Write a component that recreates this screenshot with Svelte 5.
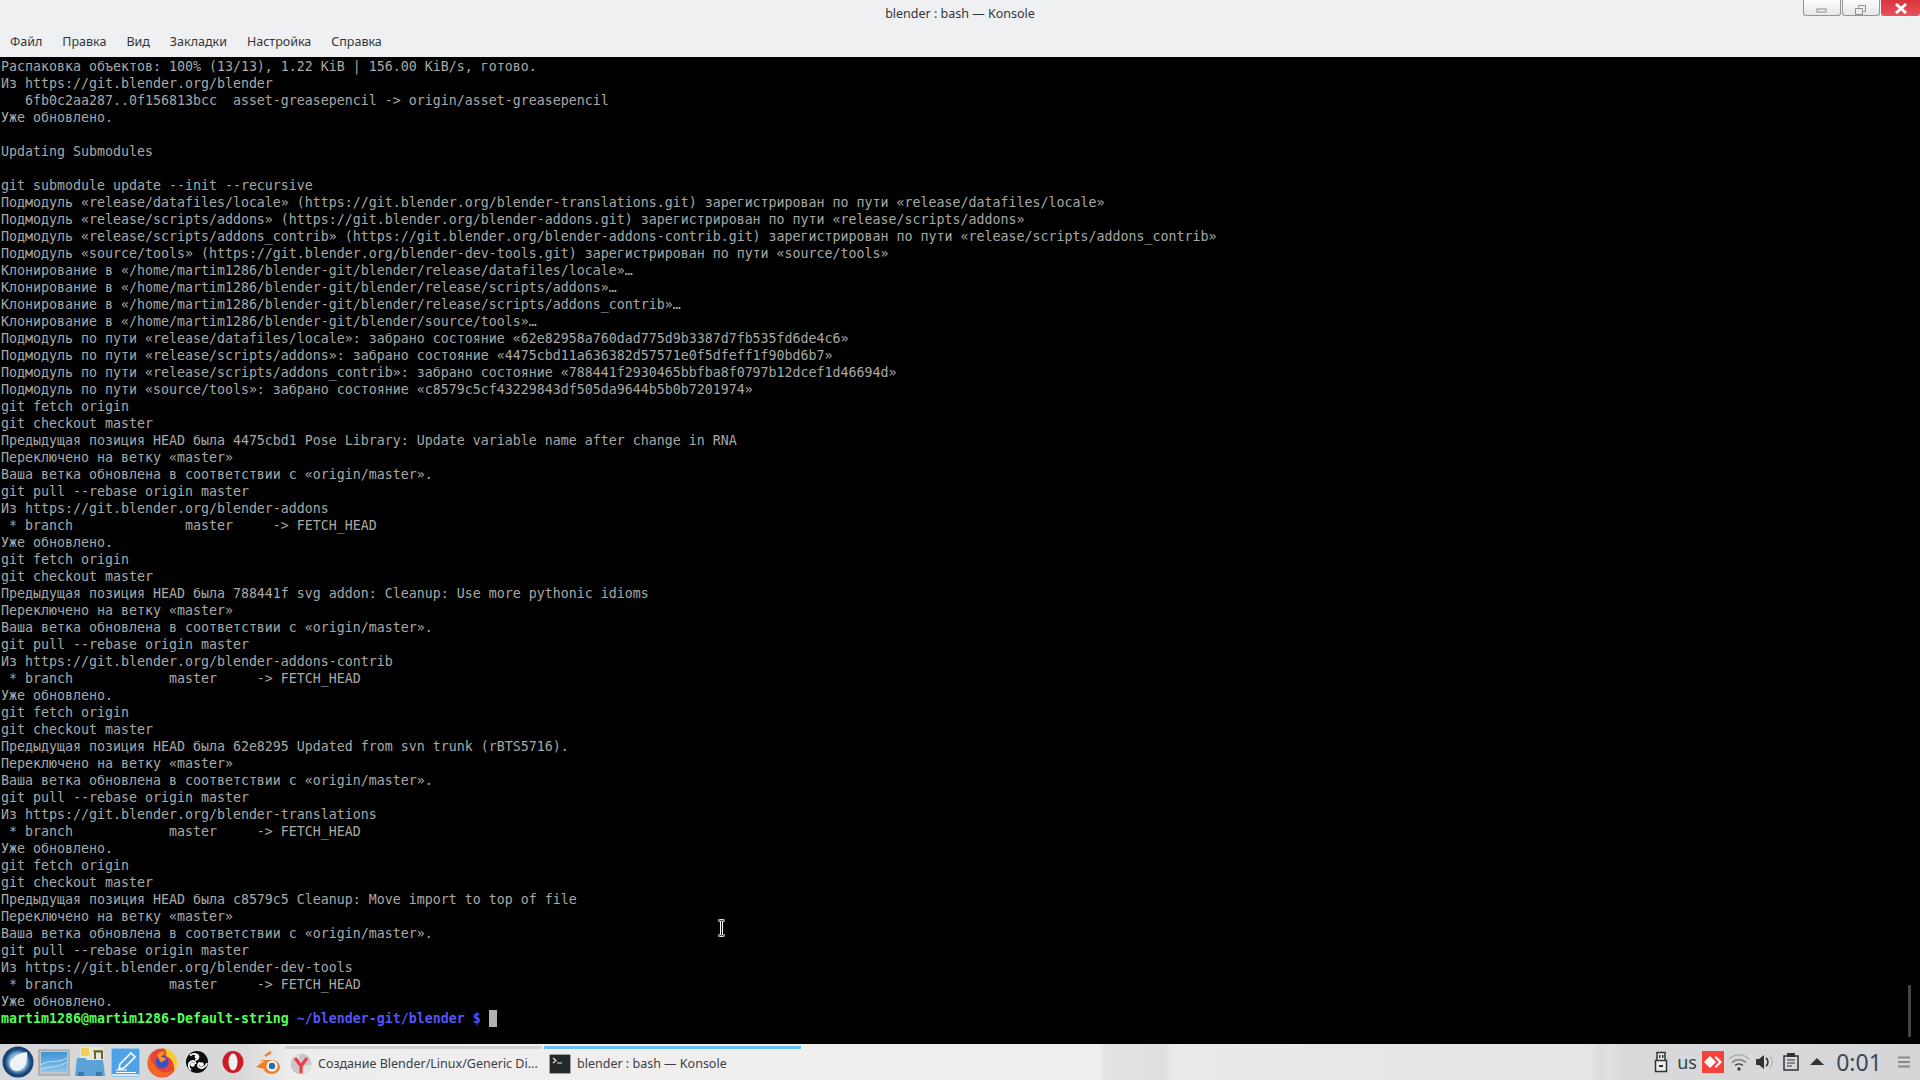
<script>
  const menus = ["Файл", "Правка", "Вид", "Закладки", "Настройка", "Справка"];

  const updated = "Уже обновлено.";
  const switched = [
    "Переключено на ветку «master»",
    "Ваша ветка обновлена в соответствии с «origin/master».",
    "git pull --rebase origin master",
  ];
  const fetchLines = ["git fetch origin", "git checkout master"];

  const lines = [
    "Распаковка объектов: 100% (13/13), 1.22 KiB | 156.00 KiB/s, готово.",
    "Из https://git.blender.org/blender",
    "   6fb0c2aa287..0f156813bcc  asset-greasepencil -> origin/asset-greasepencil",
    updated,
    "",
    "Updating Submodules",
    "",
    "git submodule update --init --recursive",
    "Подмодуль «release/datafiles/locale» (https://git.blender.org/blender-translations.git) зарегистрирован по пути «release/datafiles/locale»",
    "Подмодуль «release/scripts/addons» (https://git.blender.org/blender-addons.git) зарегистрирован по пути «release/scripts/addons»",
    "Подмодуль «release/scripts/addons_contrib» (https://git.blender.org/blender-addons-contrib.git) зарегистрирован по пути «release/scripts/addons_contrib»",
    "Подмодуль «source/tools» (https://git.blender.org/blender-dev-tools.git) зарегистрирован по пути «source/tools»",
    "Клонирование в «/home/martim1286/blender-git/blender/release/datafiles/locale»…",
    "Клонирование в «/home/martim1286/blender-git/blender/release/scripts/addons»…",
    "Клонирование в «/home/martim1286/blender-git/blender/release/scripts/addons_contrib»…",
    "Клонирование в «/home/martim1286/blender-git/blender/source/tools»…",
    "Подмодуль по пути «release/datafiles/locale»: забрано состояние «62e82958a760dad775d9b3387d7fb535fd6de4c6»",
    "Подмодуль по пути «release/scripts/addons»: забрано состояние «4475cbd11a636382d57571e0f5dfeff1f90bd6b7»",
    "Подмодуль по пути «release/scripts/addons_contrib»: забрано состояние «788441f2930465bbfba8f0797b12dcef1d46694d»",
    "Подмодуль по пути «source/tools»: забрано состояние «c8579c5cf43229843df505da9644b5b0b7201974»",
    ...fetchLines,
    "Предыдущая позиция HEAD была 4475cbd1 Pose Library: Update variable name after change in RNA",
    ...switched,
    "Из https://git.blender.org/blender-addons",
    " * branch              master     -> FETCH_HEAD",
    updated,
    ...fetchLines,
    "Предыдущая позиция HEAD была 788441f svg addon: Cleanup: Use more pythonic idioms",
    ...switched,
    "Из https://git.blender.org/blender-addons-contrib",
    " * branch            master     -> FETCH_HEAD",
    updated,
    ...fetchLines,
    "Предыдущая позиция HEAD была 62e8295 Updated from svn trunk (rBTS5716).",
    ...switched,
    "Из https://git.blender.org/blender-translations",
    " * branch            master     -> FETCH_HEAD",
    updated,
    ...fetchLines,
    "Предыдущая позиция HEAD была c8579c5 Cleanup: Move import to top of file",
    ...switched,
    "Из https://git.blender.org/blender-dev-tools",
    " * branch            master     -> FETCH_HEAD",
    updated,
  ];
</script>

<div class="screen">
  <header class="titlebar">
    <span class="title">blender : bash — Konsole</span>
    <div class="winbtns">
      <button class="winbtn" aria-label="Свернуть">
        <svg width="12" height="6" viewBox="0 0 12 6"><rect x="1" y="1" width="9" height="3" fill="#f4f4f4" stroke="#8e8e8e"/></svg>
      </button>
      <button class="winbtn" aria-label="Развернуть">
        <svg width="12" height="11" viewBox="0 0 12 11"><path d="M3.5 2.5V.5h7v6h-2M.5 3.5h7v6h-7z" fill="none" stroke="#8e8e8e"/></svg>
      </button>
      <button class="winbtn close" aria-label="Закрыть">
        <svg width="14" height="11" viewBox="0 0 14 11"><path d="M2 1l10 9M12 1L2 10" fill="none" stroke="#fff" stroke-width="3"/></svg>
      </button>
    </div>
  </header>

  <nav class="menubar">
    {#each menus as item}
      <span>{item}</span>
    {/each}
  </nav>

  <main class="terminal">
    {#each lines as line}
      <div class="row">{line}</div>
    {/each}
    <div class="row"><b class="green">martim1286@martim1286-Default-string</b> <b class="blue">~/blender-git/blender $</b> <span class="cursor"></span></div>
    <div class="scrollbar"></div>
    <svg class="ibeam" width="9" height="18" viewBox="0 0 9 18"><path d="M1 1h2l1.500 1L6 1h2M4.500 2v14M1 17h2l1.500-1L6 17h2" fill="none" stroke="#fff" stroke-width="3"/><path d="M1 1h2l1.500 1L6 1h2M4.500 2v14M1 17h2l1.500-1L6 17h2" fill="none" stroke="#111" stroke-width="1"/></svg>
  </main>

  <footer class="taskbar">
    <div class="launchers">
      <svg class="launcher" viewBox="0 0 32 32" width="32" height="32">
        <defs>
          <radialGradient id="orb"><stop offset="0.55" stop-color="#8fb4d6"/><stop offset="0.8" stop-color="#1d4f85"/><stop offset="1" stop-color="#123a68"/></radialGradient>
        </defs>
        <circle cx="16" cy="16" r="15.500" fill="url(#orb)"/>
        <path d="M25 6c1 8-1 18-10 19-5 0-8-4-7-8 1-6 9-10 17-11z" fill="#eef3f8"/>
      </svg>
      <svg class="launcher" viewBox="0 0 32 32" width="32" height="32">
        <defs>
          <linearGradient id="desk" x1="0" y1="0" x2="0" y2="1"><stop offset="0" stop-color="#3e93d3"/><stop offset="1" stop-color="#8cc6ec"/></linearGradient>
        </defs>
        <rect x="1" y="4" width="30" height="25" fill="#c3c7ca" stroke="#8f9498"/>
        <rect x="3" y="6" width="26" height="20" fill="url(#desk)"/>
        <path d="M3 19c8-6 16-1 26-7M3 23c10-3 16-1 26-7" fill="none" stroke="#bfe0f5" stroke-width="1"/>
      </svg>
      <svg class="launcher" viewBox="0 0 32 32" width="32" height="32">
        <rect x="6" y="1" width="24" height="14" fill="#e4e8d8"/>
        <rect x="7" y="2" width="8" height="8" fill="#f2cf58"/>
        <path d="M19 5h10" stroke="#8fbf5f" stroke-width="2"/>
        <path d="M21 13V5.500h7V13" fill="none" stroke="#7c5a3c" stroke-width="2"/>
        <path d="M3 12h8l2 2h16l2 16H1z" fill="#5aa2d8"/>
        <rect x="4" y="26" width="6" height="4" fill="#3a78ab"/>
        <rect x="22" y="26" width="6" height="4" fill="#3a78ab"/>
      </svg>
      <svg class="launcher" viewBox="0 0 32 32" width="32" height="32">
        <rect x="1" y="2" width="29" height="29" rx="2" fill="#4ea3e6" stroke="#cfe5f6"/>
        <path d="M10 18L21 7l4 4-11 11-5 1z" fill="#4ea3e6" stroke="#fff" stroke-width="1.600"/>
        <path d="M6 24h11M6 26.500h20" stroke="#fff" stroke-width="1"/>
        <path d="M2 29h27" stroke="#fff" stroke-width="1.500"/>
      </svg>
      <svg class="launcher" viewBox="0 0 32 32" width="32" height="32">
        <circle cx="16" cy="17" r="14.500" fill="#e8433a"/>
        <path d="M2 17a14 14 0 0 0 26 7c-8 5-18 2-20-6C5 16 4 12 5 8 3 10 2 13 2 17z" fill="#f26a21"/>
        <path d="M18 2c8 2 13 8 13 14 0 4-1 7-3 9 1-6-2-13-8-15 1-3 0-6-2-8z" fill="#ffcb2f"/>
        <circle cx="16" cy="16" r="6.500" fill="#3b4fc4"/>
        <path d="M11 9c3-4 7-4 8-3-1 2-3 3-4 5 4 0 5 2 5 3-2 1-4 1-5 3-1-3-3-5-4-8z" fill="#ff8f1f"/>
      </svg>
      <svg class="launcher" viewBox="0 0 32 32" width="32" height="32">
        <circle cx="16" cy="16" r="11" fill="#0d0d0d"/>
        <path d="M9 9.500c3-2.500 7-2 8 .5s-1 4-3 4" fill="none" stroke="#fff" stroke-width="1.800"/>
        <path d="M10 24c-3-2.500-3-7 0-8.500s4.500.5 4.500 2.500" fill="none" stroke="#fff" stroke-width="1.800"/>
        <path d="M26 17c-1 4-5 6-7.500 4.500s-1.500-4 .5-5" fill="none" stroke="#fff" stroke-width="1.800"/>
        <circle cx="16" cy="10.500" r="2.300" fill="#fff"/>
        <circle cx="11.500" cy="18.500" r="2.300" fill="#fff"/>
        <circle cx="20.500" cy="18.500" r="2.300" fill="#fff"/>
      </svg>
      <svg class="launcher" viewBox="0 0 32 32" width="32" height="32">
        <ellipse cx="16" cy="16" rx="10.500" ry="11" fill="#cc1b26"/>
        <ellipse cx="16" cy="16" rx="4.500" ry="8.500" fill="#f1f1f1"/>
      </svg>
      <svg class="launcher" viewBox="0 0 32 32" width="32" height="32">
        <path d="M3 21l8-6-6-1h13c5 0 9 3 9 7s-4 7-8 7c-5 0-8-3-8-5z" fill="#f0802a"/>
        <path d="M12 10l6-4" stroke="#f0802a" stroke-width="2.500"/>
        <circle cx="19" cy="20" r="5.500" fill="#f4f6f8"/>
        <circle cx="19" cy="20" r="3.200" fill="#2a6ea6"/>
      </svg>
    </div>

    <div class="task inactive">
      <svg viewBox="0 0 22 22" width="22" height="22">
        <circle cx="11" cy="11" r="10.500" fill="#c9c9c9"/>
        <path d="M3 5a10 10 0 0 1 7-4l-2 6zM21 12a10 10 0 0 1-8 9l1-8z" fill="#e4e4e4"/>
        <path d="M5 5l6 8 6-8M11 12v8" fill="none" stroke="#f0374a" stroke-width="3"/>
      </svg>
      <span>Создание Blender/Linux/Generic Di...</span>
    </div>
    <div class="task active">
      <svg viewBox="0 0 22 22" width="22" height="22">
        <rect x=".5" y="1.500" width="21" height="19" rx="1" fill="#23282c" stroke="#9aa0a3"/>
        <path d="M4 5l3 2.500L4 10M8 10h5" fill="none" stroke="#e8e8e8" stroke-width="1.200"/>
      </svg>
      <span>blender : bash — Konsole</span>
    </div>

    <div class="tray">
      <svg viewBox="0 0 16 22" width="16" height="22">
        <path d="M4 1.500h8v8H4zM2.500 9.500h11v11h-11z" fill="#eee" stroke="#2f3438" stroke-width="1.500"/>
        <path d="M6 4h1.500v3H6zM9 4h1.500v3H9zM6 14h4v2H6z" fill="#2f3438"/>
      </svg>
      <span class="layout">us</span>
      <span class="anydesk">
        <svg viewBox="0 0 22 22" width="22" height="22">
          <path d="M8 5l6 6-6 6-6-6z" fill="#fff"/>
          <path d="M14 5l6 6-6 6-1.500-1.500L17 11l-4.500-4.500z" fill="#fff"/>
        </svg>
      </span>
      <svg viewBox="0 0 22 18" width="22" height="18">
        <path d="M1 6a14 14 0 0 1 20 0" fill="none" stroke="#a9adb0" stroke-width="1.300"/>
        <path d="M4 9.500a10 10 0 0 1 14 0" fill="none" stroke="#6d7175" stroke-width="1.300"/>
        <path d="M7 12.500a6 6 0 0 1 8 0" fill="none" stroke="#3a3f43" stroke-width="1.300"/>
        <circle cx="11" cy="16" r="1.700" fill="#3a3f43"/>
      </svg>
      <svg viewBox="0 0 18 16" width="18" height="16">
        <path d="M0 5h3l5-4v14l-5-4H0z" fill="#2f3438"/>
        <path d="M10 4a5 5 0 0 1 0 8" fill="none" stroke="#2f3438" stroke-width="1.600"/>
        <path d="M13 1.500a8 8 0 0 1 0 13" fill="none" stroke="#a3a7aa" stroke-width="1"/>
      </svg>
      <svg viewBox="0 0 16 18" width="16" height="18">
        <path d="M1 3h14v14H1z" fill="none" stroke="#2f3438" stroke-width="1.500"/>
        <path d="M4 0h8v4H4z" fill="#2f3438"/>
        <path d="M4 7h8M4 10h8M4 13h5" stroke="#2f3438" stroke-width="1.200"/>
      </svg>
      <svg viewBox="0 0 14 8" width="14" height="8"><path d="M7 0l7 7H0z" fill="#2f3438"/></svg>
      <span class="clock">0:01</span>
      <svg class="hamburger" viewBox="0 0 14 12" width="14" height="12">
        <path d="M1 1.500h12M1 6h12M1 10.500h12" stroke="#85898c" stroke-width="2"/>
      </svg>
    </div>
  </footer>
</div>

<style>
  :global(body) {
    background: #000;
  }

  .screen {
    display: flex;
    flex-direction: column;
    height: 100vh;
    overflow: hidden;
    font-family: "Noto Sans", sans-serif;
  }

  .titlebar {
    display: flex;
    justify-content: flex-end;
    position: relative;
    height: 28px;
    background: #eff0f1;
  }

  .title {
    position: absolute;
    left: 0;
    right: 0;
    top: 4px;
    text-align: center;
    font-size: 12.500px;
    line-height: 19px;
    color: #31363b;
  }

  .winbtns {
    display: flex;
    gap: 1px;
    height: 16px;
    position: relative;
  }

  .winbtn {
    width: 38px;
    padding: 6px 0 0;
    border: 1px solid #969696;
    border-top: 0;
    border-radius: 0 0 3px 3px;
    background: linear-gradient(#fbfbfb, #e7e7e7);
    display: flex;
    justify-content: center;
    align-items: center;
  }

  .winbtn.close {
    width: 39px;
    border: 0;
    padding: 0;
    background: linear-gradient(#d9343c, #e8525a);
  }

  .menubar {
    display: flex;
    gap: 20px;
    height: 27px;
    padding: 0 10px 2px;
    align-items: center;
    background: #eff0f1;
    font-size: 12.500px;
    color: #31363b;
  }

  .terminal {
    flex: 1;
    position: relative;
    padding: 1px 0 0 1px;
    background: #000;
    color: #a8a8a8;
    font-family: "DejaVu Sans Mono", monospace;
    font-size: 13.29px;
  }

  .row {
    height: 17px;
    line-height: 17px;
    white-space: pre;
  }

  .green {
    color: #54fe54;
  }

  .blue {
    color: #5454fe;
  }

  .cursor {
    display: inline-block;
    width: 8px;
    height: 17px;
    vertical-align: top;
    background: #b2b2b2;
  }

  .scrollbar {
    position: absolute;
    right: 9px;
    bottom: 7px;
    width: 3px;
    height: 52px;
    background: #444;
    border-radius: 1px;
  }

  .ibeam {
    position: absolute;
    left: 717px;
    top: 862px;
  }

  .taskbar {
    display: flex;
    align-items: center;
    height: 36px;
    flex-shrink: 0;
    background: linear-gradient(
      90deg,
      #d5d6d7 0,
      #d8d8d8 240px,
      #eeeded 290px,
      #f1efee 800px,
      #efeeed 1100px,
      #e3e3e3 1105px,
      #dedfe0 1165px,
      #eaeae9 1172px,
      #e6e5e4 1590px,
      #dcdcdc 1600px,
      #e2e2e2 1610px,
      #d8d9da 1622px,
      #d5d6d7 100%
    );
  }

  .launchers {
    display: flex;
    gap: 3.900px;
    width: 285px;
    flex-shrink: 0;
    padding-left: 2px;
    box-sizing: border-box;
  }

  .launcher {
    flex-shrink: 0;
  }

  .task {
    display: flex;
    align-items: center;
    gap: 6px;
    width: 257px;
    flex-shrink: 0;
    height: 36px;
    padding-left: 5px;
    box-sizing: border-box;
    border-top: 3px solid transparent;
    background-clip: padding-box;
    font-size: 12.500px;
    color: #3b4045;
    white-space: nowrap;
    position: relative;
  }

  .task svg {
    flex-shrink: 0;
  }

  .task.inactive {
    margin-right: 2px;
  }

  .task.inactive::before,
  .task.active::before {
    content: "";
    position: absolute;
    left: 0;
    right: 0;
    top: -1px;
    height: 3px;
  }

  .task.inactive::before {
    background: #d0d0d0;
  }

  .task.active::before {
    background: #6cbcea;
  }

  .tray {
    margin-left: auto;
    display: grid;
    grid-template-columns: repeat(7, 26px) 58px 32px;
    justify-items: center;
    align-items: center;
    color: #3b4045;
  }

  .layout {
    font-size: 18px;
    line-height: 20px;
  }

  .anydesk {
    display: flex;
    width: 22px;
    height: 22px;
    background: #f5413a;
  }

  .clock {
    font-size: 23px;
    line-height: 30px;
    color: #3c4a58;
  }
</style>
